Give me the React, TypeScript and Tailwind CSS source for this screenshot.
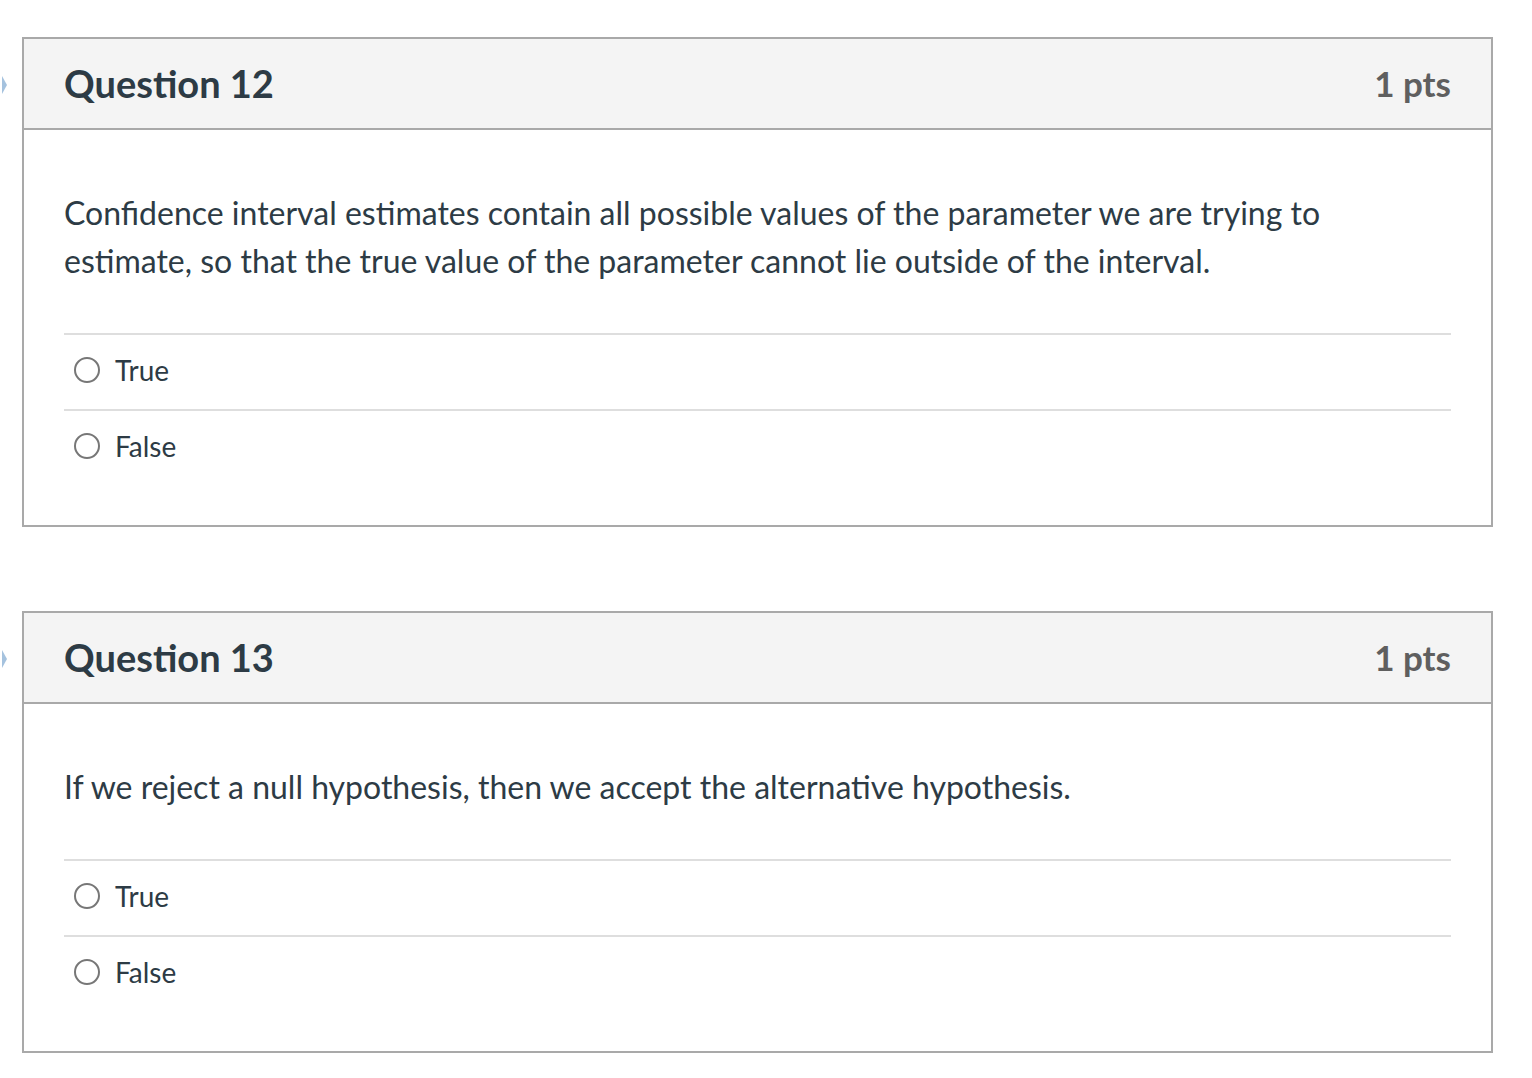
type Question = {
  id: number;
  title: string;
  points: string;
  text: string;
  answers: string[];
};

const questions: Question[] = [
  {
    id: 12,
    title: 'Question 12',
    points: '1 pts',
    text: 'Confidence interval estimates contain all possible values of the parameter we are trying to estimate, so that the true value of the parameter cannot lie outside of the interval.',
    answers: ['True', 'False'],
  },
  {
    id: 13,
    title: 'Question 13',
    points: '1 pts',
    text: 'If we reject a null hypothesis, then we accept the alternative hypothesis.',
    answers: ['True', 'False'],
  },
];

function FlagMarker() {
  return (
    <svg
      className="absolute -left-[22px] top-[34px]"
      width="6"
      height="24"
      viewBox="0 0 6 24"
    >
      <path d="M-6 3 L0 3 L5 12 L0 21 L-6 21 Z" fill="#8fb3d6" opacity="0.8" />
    </svg>
  );
}

function AnswerRow({ label, name }: { label: string; name: string }) {
  return (
    <label className="flex h-[76px] items-center border-t-2 border-[#dedede] pb-[4px] pl-[10px]">
      <span className="box-border h-[26px] w-[26px] rounded-full border-2 border-[#777777] bg-white" />
      <input type="radio" name={name} className="sr-only" />
      <span className="ml-[15px] text-[28px] leading-none text-[#2d3b45]">{label}</span>
    </label>
  );
}

function QuestionCard({ question }: { question: Question }) {
  return (
    <div className="relative border-2 border-[#a9a9a9] bg-white">
      {/* marker peeking from the page edge */}
      <FlagMarker />

      {/* Header */}
      <div className="flex h-[91px] items-center justify-between border-b-2 border-[#a9a9a9] bg-[#f4f4f4] px-[40px]">
        <h2 className="text-[38px] font-bold text-[#2d3b45]">{question.title}</h2>
        <div className="text-[35px] font-bold text-[#5f5f5f]">{question.points}</div>
      </div>

      {/* Body */}
      <div className="px-[40px] pt-[59px] pb-[40px]">
        <p className="max-w-[1330px] text-[32px] leading-[48px] text-[#2d3b45]">{question.text}</p>
        <div className="mt-[48px]">
          {question.answers.map((answer) => (
            <AnswerRow key={answer} label={answer} name={`q${question.id}`} />
          ))}
        </div>
      </div>
    </div>
  );
}

export default function App() {
  return (
    <div
      className="min-h-[1078px] w-full overflow-hidden bg-white pt-[37px]"
      style={{ fontFamily: 'Lato, "Open Sans", sans-serif' }}
    >
      <div className="ml-[22px] flex w-[1471px] flex-col gap-[84px]">
        {questions.map((q) => (
          <QuestionCard key={q.id} question={q} />
        ))}
      </div>
    </div>
  );
}
